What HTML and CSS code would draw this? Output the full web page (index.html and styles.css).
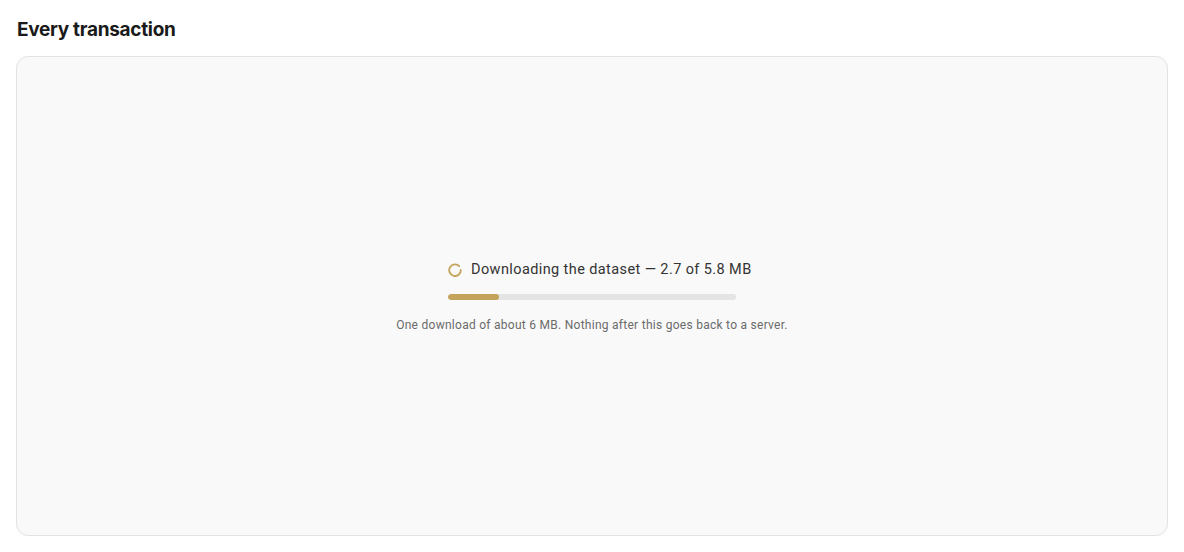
FILE: index.html
```html
<!DOCTYPE html>
<html>
<head>
<meta charset="utf-8">
<link rel="stylesheet" href="styles.css">
</head>
<body>
<div class="page">
  <h2 class="title">Every transaction</h2>
  <div class="card">
    <div class="loader">
      <div class="progress-block">
        <div class="status">
          <svg class="spinner" width="14" height="14" viewBox="0 0 14 14">
            <path d="M11.2 3.2 A5.8 5.8 0 1 0 12.8 7" fill="none" stroke="#c4a45a" stroke-width="1.8" stroke-linecap="round"/>
          </svg>
          <span>Downloading the dataset — 2.7 of 5.8 MB</span>
        </div>
        <div class="track"><div class="fill" style="width:17.7%"></div></div>
      </div>
      <p class="note">One download of about 6 MB. Nothing after this goes back to a server.</p>
    </div>
  </div>
</div>
</body>
</html>
```
FILE: styles.css
```css
html, body { margin: 0; padding: 0; background: #fff; }
.page { padding: 18px 16px 16px 16px; display: flex; flex-direction: column; }
.title {
  margin: 0 0 0 1px;
  font-family: Inter, "Open Sans", sans-serif;
  font-weight: 700;
  font-size: 19px;
  line-height: 24px;
  color: #1a1a1a;
  letter-spacing: -0.3px;
}
.card {
  margin-top: 14px;
  height: 478px;
  border: 1px solid #e3e3e3;
  border-radius: 12px;
  background: #f9f9f9;
  display: flex;
  align-items: center;
  justify-content: center;
}
.loader { display: flex; flex-direction: column; align-items: center; }
.progress-block { width: 288px; display: flex; flex-direction: column; }
.status {
  display: flex; align-items: center; gap: 9px;
  margin-top: 1px;
  white-space: nowrap;
  font-family: Roboto, sans-serif;
  font-size: 14.5px;
  letter-spacing: 0.4px;
  line-height: 20px;
  color: #333;
}
.spinner { flex: none; }
.track {
  margin-top: 14px;
  height: 6px;
  border-radius: 3px;
  background: #e4e4e4;
  overflow: hidden;
}
.fill { height: 100%; background: #c4a45a; border-radius: 3px; }
.note {
  margin: 17px 0 0 0;
  font-family: Roboto, sans-serif;
  font-size: 12px;
  letter-spacing: 0.27px;
  line-height: 16px;
  color: #6b6b6b;
  white-space: nowrap;
}
```
